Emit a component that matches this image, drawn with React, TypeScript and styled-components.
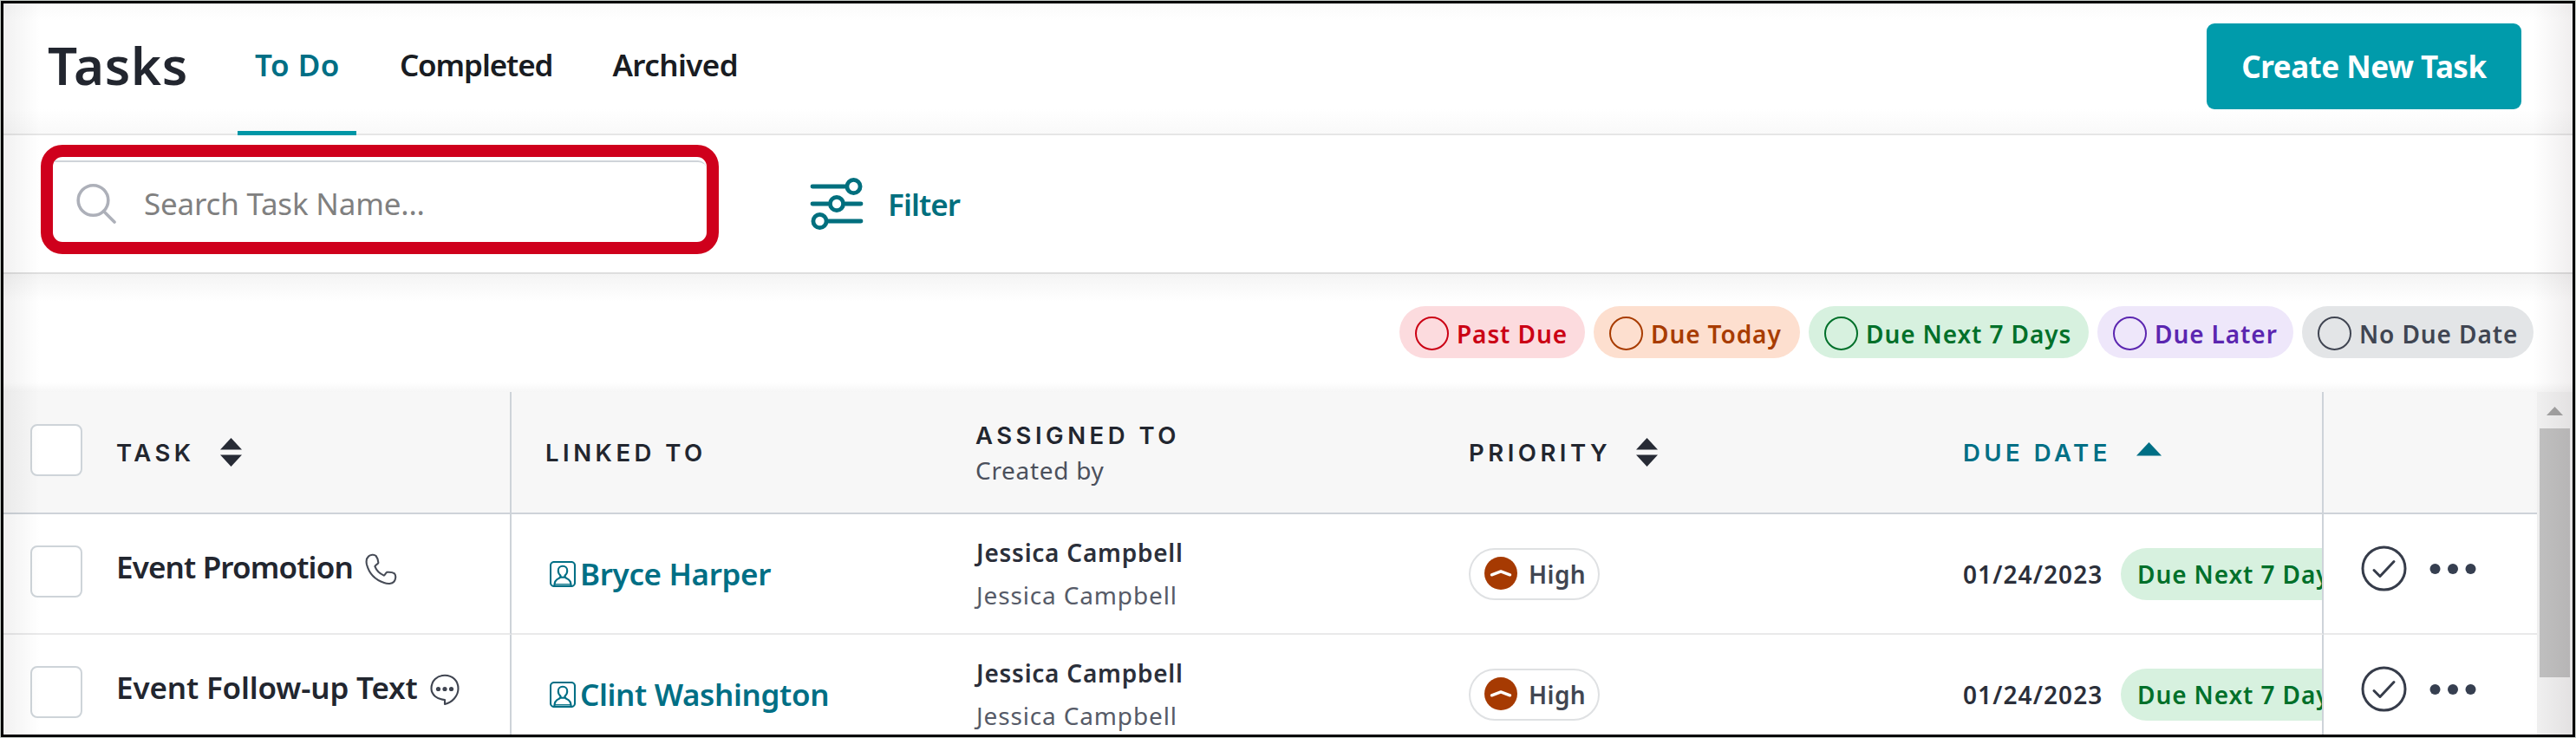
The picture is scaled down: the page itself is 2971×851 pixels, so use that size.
import React from 'react';
import styled, { createGlobalStyle } from 'styled-components';

const GlobalStyle = createGlobalStyle`
  * {
    box-sizing: border-box;
  }

  body {
    margin: 0;
    font-family: 'Noto Sans', sans-serif;
    color: #22262f;
  }

  svg {
    display: block;
    flex: none;
  }
`;

const Frame = styled.div`
  position: relative;
  width: 2971px;
  height: 851px;
  overflow: hidden;
  border: 1px solid #c4cbc6;
  background: #fff;

  /* dark outline with a soft inner shade on the left and right edges */
  &::after {
    content: '';
    position: absolute;
    inset: 0;
    border: 3px solid #000;
    pointer-events: none;
    background:
      linear-gradient(to right, rgba(0, 0, 0, 0.055), transparent 42px),
      linear-gradient(to left, rgba(30, 0, 10, 0.065), transparent 46px);
  }
`;

const Page = styled.div`
  display: flex;
  flex-direction: column;
  height: 843px;
  margin: 3px;
`;

const Header = styled.header`
  display: flex;
  height: 152px;
  flex: none;
  padding: 0 59px 0 51px;
  border-bottom: 2px solid #e6e6e6;
  background: linear-gradient(to bottom, #fafafa, #fff 20px, #fff 122px, #f9f9f9);
`;

const Title = styled.h1`
  width: 168px;
  margin: 0;
  font-size: 60px;
  font-weight: 600;
  line-height: 143px;
  letter-spacing: 0.6px;
`;

const Tabs = styled.nav`
  display: flex;
  gap: 30px;
  margin-left: 51px;
`;

const Tab = styled.a<{ $active?: boolean; $track: number }>`
  height: 152px;
  padding: 0 19px 0 20px;
  border-bottom: 5px solid ${p => (p.$active ? '#0096a6' : 'transparent')};
  color: ${p => (p.$active ? '#006f85' : '#191c22')};
  font-size: 35px;
  font-weight: 600;
  line-height: 141px;
  letter-spacing: ${p => p.$track}px;
`;

const CreateButton = styled.button`
  width: 363px;
  height: 99px;
  margin: 23px 0 0 auto;
  padding: 0;
  border: none;
  border-radius: 9px;
  background: #009bab;
  color: #fff;
  font: 700 35px 'Noto Sans', sans-serif;
  letter-spacing: -0.5px;
`;

const Toolbar = styled.div`
  display: flex;
  height: 160px;
  flex: none;
  padding: 11px 0 0 43px;
  border-bottom: 2px solid #dedede;
`;

const Highlight = styled.div`
  width: 782px;
  height: 126px;
  padding-top: 4px;
  overflow: hidden;
  border: 14px solid #cf001c;
  border-radius: 25px;
`;

const SearchField = styled.label`
  display: flex;
  align-items: center;
  gap: 32px;
  height: 94px;
  padding: 3px 0 0 27px;
  border-top: 2px solid #cfd4d9;
  border-radius: 0 10px 0 0;
`;

const SearchInput = styled.input`
  width: 500px;
  padding: 0;
  border: none;
  outline: none;
  background: transparent;
  font: 400 35px 'Noto Sans', sans-serif;
  letter-spacing: -0.2px;

  &::placeholder {
    color: #808080;
    opacity: 1;
  }
`;

const FilterButton = styled.div`
  display: flex;
  align-items: center;
  gap: 28px;
  height: 136px;
  margin-left: 105px;
  color: #006f7e;
  font-size: 35px;
  font-weight: 600;
  letter-spacing: -0.9px;
`;

const Legend = styled.div`
  display: flex;
  justify-content: flex-end;
  gap: 10px;
  height: 136px;
  flex: none;
  padding: 37px 45px 0 0;
  background: linear-gradient(to bottom, #f4f4f4, #fff 32px, #fff 125px, #f6f6f6);
`;

const Pill = styled.div<{ $bg: string; $color: string; $width: number }>`
  display: flex;
  align-items: center;
  gap: 9px;
  width: ${p => p.$width}px;
  height: 60px;
  padding: 3px 0 0 18px;
  border-radius: 30px;
  background: ${p => p.$bg};
  color: ${p => p.$color};
  font-size: 28px;
  font-weight: 600;
  letter-spacing: 0.9px;
  white-space: nowrap;

  &::before {
    content: '';
    width: 35px;
    height: 35px;
    border: 2px solid currentColor;
    border-radius: 50%;
  }
`;

const TableArea = styled.div`
  display: flex;
  flex: 1;
  min-height: 0;
`;

const Table = styled.div`
  width: 2922px;
  overflow: hidden;
`;

const Row = styled.div<{ $head?: boolean }>`
  display: grid;
  grid-template-columns: 586px 495px 570px 570px 455px 1fr;
  height: ${p => (p.$head ? 141 : 139)}px;
  background: ${p => (p.$head ? '#f7f7f7' : '#fff')};
`;

const Cell = styled.div<{ $head?: boolean; $left: number; $divider?: boolean }>`
  display: flex;
  align-items: center;
  min-width: 0;
  overflow: hidden;
  padding-left: ${p => p.$left}px;
  border-bottom: 2px solid ${p => (p.$head ? '#ced3d9' : '#e9e9ea')};
  border-right: ${p => (p.$divider ? '2px solid #ced3d9' : 'none')};
`;

const Checkbox = styled.span`
  width: 60px;
  height: 60px;
  flex: none;
  margin: 0 39px 5px 0;
  border: 2px solid #ced4d9;
  border-radius: 8px;
  background: #fff;
`;

const HeadLabel = styled.span<{ $active?: boolean }>`
  margin-right: 29px;
  color: ${p => (p.$active ? '#006f85' : 'inherit')};
  font-family: Inter, sans-serif;
  font-size: 27.5px;
  font-weight: 600;
  line-height: 40px;
  letter-spacing: 4.5px;
`;

const Stack = styled.div`
  display: flex;
  flex-direction: column;
`;

const SubLabel = styled.span`
  color: #4b505c;
  font-size: 28px;
  line-height: 40px;
  letter-spacing: 0.7px;
`;

const TaskName = styled.span<{ $track: number }>`
  display: flex;
  align-items: center;
  gap: 14px;
  padding-bottom: 16px;
  font-size: 35px;
  font-weight: 600;
  letter-spacing: ${p => p.$track}px;
  white-space: nowrap;

  svg {
    margin-top: 5px;
  }
`;

const Contact = styled.a`
  display: flex;
  align-items: center;
  gap: 5px;
  color: #006f85;
  font-size: 35px;
  font-weight: 600;
  letter-spacing: -0.35px;
`;

const Person = styled.span<{ $muted?: boolean }>`
  color: ${p => (p.$muted ? '#565b68' : '#2b2f3a')};
  font-size: 28px;
  font-weight: ${p => (p.$muted ? 400 : 600)};
  line-height: 49px;
  letter-spacing: ${p => (p.$muted ? 0.85 : 0.75)}px;
`;

const PriorityPill = styled.span`
  display: flex;
  align-items: center;
  gap: 12px;
  width: 151px;
  height: 60px;
  padding-left: 15px;
  border: 2px solid #dfe1e3;
  border-radius: 30px;
  color: #414652;
  font-size: 28px;
  font-weight: 600;
  letter-spacing: 0.4px;
`;

const DueDate = styled.span`
  width: 182px;
  flex: none;
  color: #2b2f3a;
  font-size: 28px;
  font-weight: 600;
  letter-spacing: 1.1px;
`;

const DueTag = styled.span`
  flex: none;
  height: 60px;
  padding: 0 19px;
  border-radius: 30px;
  background: #d7f1df;
  color: #00702a;
  font-size: 28px;
  font-weight: 600;
  line-height: 60px;
  letter-spacing: 0.9px;
`;

const Actions = styled.div`
  display: flex;
  align-items: center;
  gap: 26px;
  padding-bottom: 12px;
`;

const Scrollbar = styled.div`
  display: flex;
  flex-direction: column;
  align-items: center;
  width: 41px;
  padding-top: 17px;
  background: #f1f1f1;
`;

const Thumb = styled.div`
  width: 35px;
  height: 287px;
  margin-top: 15px;
  background: #c1c1c1;
`;

const SearchIcon = () => (
  <svg width="46" height="48" viewBox="0 0 46 48" fill="none" stroke="#adb0b9" strokeWidth="3.6" strokeLinecap="round">
    <circle cx="19.5" cy="20" r="17.3" />
    <path d="M31.5 32.5 44 45" />
  </svg>
);

const FilterIcon = () => (
  <svg width="62" height="62" viewBox="0 0 62 62" fill="none" stroke="currentColor" strokeWidth="4.8" strokeLinecap="round">
    <path d="M3 11H41M3 31H21M41 31H59M21 51H59" />
    <circle cx="50.5" cy="11" r="7.6" />
    <circle cx="31" cy="31" r="7.6" />
    <circle cx="11.5" cy="51" r="7.6" />
  </svg>
);

const SortIcon = () => (
  <svg width="25" height="33" viewBox="0 0 25 33" fill="#272b35">
    <path d="M12.5 0 25 13.5H0zM12.5 33 25 19.5H0z" />
  </svg>
);

const SortUpIcon = () => (
  <svg width="29" height="24" viewBox="0 0 29 24" fill="#006f85">
    <path d="M14.5 0 29 15.5H0z" />
  </svg>
);

const PhoneIcon = () => (
  <svg width="37" height="37" viewBox="0 0 37 37" fill="none" stroke="#474c57" strokeWidth="2.1" strokeLinejoin="round">
    <path d="M4 3.6C6 1.6 10.5 1 12.6 3C14.2 5 15.3 8.5 15.4 11C14.8 12.6 12 13.4 11.4 15.2C13 19.5 17.6 23.8 21.8 25.6C23.6 25.2 23.4 22.6 25.4 21.8C28.4 21.6 32.2 22 34 23.4C36 25.4 35.4 30.5 33.4 32.8C31.2 35.4 26 35.6 22 34C11.5 30.5 4.5 22.5 2 13C1.2 9.5 1.8 5.6 4 3.6Z" />
  </svg>
);

const TextIcon = () => (
  <svg width="34" height="37" viewBox="0 0 34 37" fill="none" stroke="#3f4450" strokeWidth="2.1" strokeLinejoin="round">
    <path d="M17 30C8 29.5 1.5 24 1.5 17C1.5 8 8 1.8 17 1.8S32.5 8 32.5 17C32.5 25.5 25.5 33 17 35Z" />
    <g fill="#3f4450" stroke="none">
      <circle cx="9.5" cy="17.5" r="2.6" />
      <circle cx="17" cy="17.5" r="2.6" />
      <circle cx="24.5" cy="17.5" r="2.6" />
    </g>
  </svg>
);

const ContactIcon = () => (
  <svg width="30" height="30" viewBox="0 0 30 30" fill="none" stroke="currentColor" strokeWidth="2.1">
    <rect x="1" y="1" width="28" height="28" rx="4" />
    <path d="M15 5.8C11.8 5.8 9.8 8 9.8 11C9.8 13.2 10.8 15.3 12.4 16.6C12.7 18.6 12 19.3 10.4 19.9C7.4 21 5.4 23.5 5.2 29M15 5.8C18.2 5.8 20.2 8 20.2 11C20.2 13.2 19.2 15.3 17.6 16.6C17.3 18.6 18 19.3 19.6 19.9C22.6 21 24.6 23.5 24.8 29M12.4 17.8C14 19 16 19 17.6 17.8" />
    <path d="M5 26.8H25" strokeWidth="1.4" />
  </svg>
);

const HighIcon = () => (
  <svg width="40" height="40" viewBox="0 0 40 40">
    <circle cx="20" cy="19" r="19" fill="#a63a02" />
    <path d="M9.5 20.8 20 16.9 30.5 20.8" fill="none" stroke="#fff" strokeWidth="3.4" strokeLinecap="round" strokeLinejoin="round" />
  </svg>
);

const CheckIcon = () => (
  <svg width="53" height="53" viewBox="0 0 53 53" fill="none" stroke="#363c4a" strokeWidth="3" strokeLinecap="round" strokeLinejoin="round">
    <circle cx="26.5" cy="26.5" r="24.5" />
    <path d="M15 28.5 22 35.5 38 18.5" />
  </svg>
);

const MoreIcon = () => (
  <svg width="54" height="14" viewBox="0 0 54 14" fill="#363f50">
    <circle cx="6.5" cy="7" r="6" />
    <circle cx="27" cy="7" r="6" />
    <circle cx="47.5" cy="7" r="6" />
  </svg>
);

const pills = [
  { label: 'Past Due', bg: '#fcdbde', color: '#cb0014', width: 214 },
  { label: 'Due Today', bg: '#fddfcf', color: '#a83c00', width: 238 },
  { label: 'Due Next 7 Days', bg: '#d7f1df', color: '#00702a', width: 323 },
  { label: 'Due Later', bg: '#eee7fa', color: '#5b26b0', width: 226 },
  { label: 'No Due Date', bg: '#e3e5e7', color: '#404552', width: 267 },
];

const tasks = [
  { name: 'Event Promotion', track: -0.85, icon: <PhoneIcon />, contact: 'Bryce Harper' },
  { name: 'Event Follow-up Text', track: -0.15, icon: <TextIcon />, contact: 'Clint Washington' },
];

const App: React.FC = () => {
  return (
    <Frame>
      <GlobalStyle />
      <Page>
        <Header>
          <Title>Tasks</Title>
          <Tabs>
            <Tab $active $track={0.5}>To Do</Tab>
            <Tab $track={-1.1}>Completed</Tab>
            <Tab $track={-0.6}>Archived</Tab>
          </Tabs>
          <CreateButton>Create New Task</CreateButton>
        </Header>

        <Toolbar>
          <Highlight>
            <SearchField>
              <SearchIcon />
              <SearchInput placeholder="Search Task Name..." />
            </SearchField>
          </Highlight>
          <FilterButton>
            <FilterIcon />
            Filter
          </FilterButton>
        </Toolbar>

        <Legend>
          {pills.map(p => (
            <Pill key={p.label} $bg={p.bg} $color={p.color} $width={p.width}>{p.label}</Pill>
          ))}
        </Legend>

        <TableArea>
          <Table>
            <Row $head>
              <Cell $head $left={31} $divider>
                <Checkbox />
                <HeadLabel>TASK</HeadLabel>
                <SortIcon />
              </Cell>
              <Cell $head $left={39}>
                <HeadLabel>LINKED TO</HeadLabel>
              </Cell>
              <Cell $head $left={40}>
                <Stack>
                  <HeadLabel>ASSIGNED TO</HeadLabel>
                  <SubLabel>Created by</SubLabel>
                </Stack>
              </Cell>
              <Cell $head $left={39}>
                <HeadLabel>PRIORITY</HeadLabel>
                <SortIcon />
              </Cell>
              <Cell $head $left={39} $divider>
                <HeadLabel $active>DUE DATE</HeadLabel>
                <SortUpIcon />
              </Cell>
              <Cell $head $left={0} />
            </Row>

            {tasks.map(task => (
              <Row key={task.name}>
                <Cell $left={31} $divider>
                  <Checkbox />
                  <TaskName $track={task.track}>
                    {task.name}
                    {task.icon}
                  </TaskName>
                </Cell>
                <Cell $left={44}>
                  <Contact>
                    <ContactIcon />
                    {task.contact}
                  </Contact>
                </Cell>
                <Cell $left={41}>
                  <Stack>
                    <Person>Jessica Campbell</Person>
                    <Person $muted>Jessica Campbell</Person>
                  </Stack>
                </Cell>
                <Cell $left={39}>
                  <PriorityPill>
                    <HighIcon />
                    High
                  </PriorityPill>
                </Cell>
                <Cell $left={39} $divider>
                  <DueDate>01/24/2023</DueDate>
                  <DueTag>Due Next 7 Days</DueTag>
                </Cell>
                <Cell $left={43}>
                  <Actions>
                    <CheckIcon />
                    <MoreIcon />
                  </Actions>
                </Cell>
              </Row>
            ))}
          </Table>
          <Scrollbar>
            <svg width="19" height="10" viewBox="0 0 19 10" fill="#a3a3a3">
              <path d="M9.5 0 19 10H0z" />
            </svg>
            <Thumb />
          </Scrollbar>
        </TableArea>
      </Page>
    </Frame>
  );
};

export default App;
